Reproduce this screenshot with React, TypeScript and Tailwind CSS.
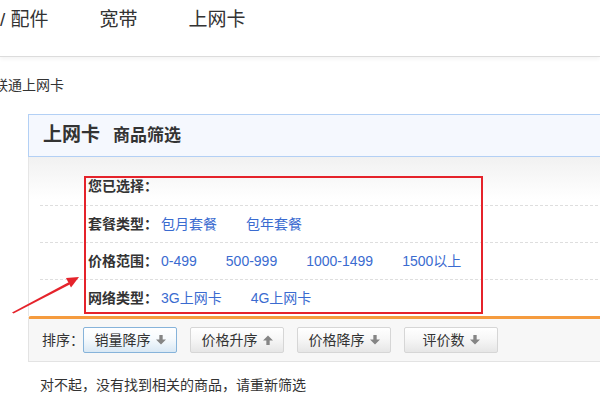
import { ReactNode } from "react";

const font = { fontFamily: '"Liberation Sans", "Noto Sans CJK SC", sans-serif' };

type FilterRow = {
  label: string;
  items: string[];
};

const rows: FilterRow[] = [
  { label: "您已选择：", items: [] },
  { label: "套餐类型：", items: ["包月套餐", "包年套餐"] },
  { label: "价格范围：", items: ["0-499", "500-999", "1000-1499", "1500以上"] },
  { label: "网络类型：", items: ["3G上网卡", "4G上网卡"] },
];

function SortArrow({ up }: { up?: boolean }) {
  return (
    <svg width="10" height="10" viewBox="0 0 9 9" className="ml-[5px]">
      {up ? (
        <path d="M4.5 0.5 L9 5 L6 5 L6 9 L3 9 L3 5 L0 5 Z" fill="#858585" />
      ) : (
        <path d="M3 0 L6 0 L6 4 L9 4 L4.5 8.5 L0 4 L3 4 Z" fill="#858585" />
      )}
    </svg>
  );
}

function SortButton({
  children,
  active,
  up,
}: {
  children: ReactNode;
  active?: boolean;
  up?: boolean;
}) {
  return (
    <button
      className={
        active
          ? "flex h-[26px] w-[94px] items-center justify-center rounded-[2px] border border-[#86b3da] bg-[linear-gradient(to_bottom,#ffffff_0%,#f6fafd_45%,#d9e8f4_100%)] text-[14px] text-[#333]"
          : "flex h-[26px] w-[94px] items-center justify-center rounded-[2px] border border-[#d6d6d6] bg-[linear-gradient(to_bottom,#ffffff_0%,#f7f7f7_45%,#e6e6e6_100%)] text-[14px] text-[#333]"
      }
    >
      {children}
      <SortArrow up={up} />
    </button>
  );
}

export default function App() {
  return (
    <div
      className="relative h-[400px] w-[600px] overflow-hidden bg-white text-[#333]"
      style={font}
    >
      {/* top nav */}
      <div className="flex h-[57px] gap-[51px] border-b border-[#dcdcdc] pt-[8px] text-[19px] leading-[24px] text-[#333] shadow-[0_2px_4px_rgba(0,0,0,0.05)]">
        <span>/ 配件</span>
        <span>宽带</span>
        <span>上网卡</span>
      </div>

      {/* breadcrumb, clipped at the left edge like the page */}
      <div className="ml-[-6px] mt-[18px] text-[14px] leading-[20px] text-[#333]">
        联通上网卡
      </div>

      {/* panel */}
      <div className="ml-[28px] mt-[19px] w-[640px]">
        <div className="flex h-[43px] items-center gap-[13px] border border-[#b3d0f5] bg-[#f5f8fe] pl-[14px] font-bold">
          <span className="text-[19px]">上网卡</span>
          <span className="text-[17px]">商品筛选</span>
        </div>

        <div className="border-l border-[#e6e6e6] bg-[linear-gradient(to_bottom,#f1f1f1_0px,#ffffff_42px)] pt-[11px]">
          {rows.map((row, i) => (
            <div
              key={row.label}
              className={
                i === 0
                  ? "ml-[11px] flex h-[37px] items-center pl-[48px] text-[14px]"
                  : "ml-[11px] flex h-[37px] items-center border-t border-dashed border-[#dedede] pl-[48px] text-[14px]"
              }
            >
              <span className="w-[73px] font-bold">{row.label}</span>
              <div className="flex gap-[29px] text-[#3a6bd0]">
                {row.items.map((item) => (
                  <span key={item}>{item}</span>
                ))}
              </div>
            </div>
          ))}
        </div>

        <div className="rounded-tl-[3px] border-t-[3px] border-l border-b border-t-[#f59b3e] border-l-[#e3e3e3] border-b-[#e3e3e3] bg-[#f7f7f7]">
          <div className="flex items-center py-[8px] pl-[13px]">
            <span className="w-[41px] shrink-0 whitespace-nowrap text-[14px]">排序：</span>
            <div className="flex gap-[13px]">
              <SortButton active>销量降序</SortButton>
              <SortButton up>价格升序</SortButton>
              <SortButton>价格降序</SortButton>
              <SortButton>评价数</SortButton>
            </div>
          </div>
        </div>
      </div>

      <div className="ml-[40px] mt-[13px] text-[14px] leading-[20px] text-[#333]">
        对不起，没有找到相关的商品，请重新筛选
      </div>

      {/* annotation overlay */}
      <div className="pointer-events-none absolute left-[84px] top-[176px] h-[138px] w-[399px] border-2 border-[#e5232b]" />
      <svg
        className="pointer-events-none absolute left-0 top-0"
        width="600"
        height="400"
        viewBox="0 0 600 400"
      >
        <polygon
          points="12,312.5 13.5,313.5 69.8,284.5 68.6,282.2"
          fill="#e5232b"
        />
        <polygon points="79,277 66,278 71,287.5" fill="#e5232b" />
      </svg>
    </div>
  );
}
